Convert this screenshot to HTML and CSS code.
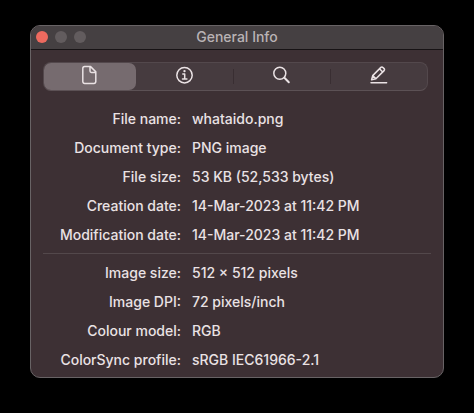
FILE: index.html
```html
<!DOCTYPE html>
<html lang="en">
<head>
  <meta charset="UTF-8">
  <meta name="viewport" content="width=device-width, initial-scale=1.0">
  <title>General Info</title>
  <link rel="stylesheet" href="styles.css">
</head>
<body>
  <main class="window">
    <header class="titlebar">
      <div class="lights">
        <button class="light close" aria-label="Close"></button>
        <button class="light" aria-label="Minimize" disabled></button>
        <button class="light" aria-label="Zoom" disabled></button>
      </div>
      <h1 class="title">General Info</h1>
    </header>

    <div class="content">
      <nav class="tabs">
        <button class="tab active" aria-label="General">
          <svg class="icon" viewBox="0 0 20 20">
            <path d="M4.6 1.6h6l5.2 5.2v9.8a1.8 1.8 0 0 1-1.8 1.8H4.6a1.8 1.8 0 0 1-1.8-1.8V3.4a1.8 1.8 0 0 1 1.8-1.8M10 1.9v4.1a1.4 1.4 0 0 0 1.4 1.4h4.1"/>
          </svg>
        </button>
        <button class="tab" aria-label="Info">
          <svg class="icon" viewBox="0 0 20 20">
            <circle cx="9.5" cy="10.2" r="7.7"/>
            <path d="M7.8 8.9h1.9v5M7.5 14h4.4"/>
            <circle class="dot" cx="9.5" cy="6.1" r="1.2"/>
          </svg>
        </button>
        <button class="tab" aria-label="Search">
          <svg class="icon" viewBox="0 0 20 20">
            <circle cx="7.8" cy="8.2" r="6"/>
            <path class="handle" d="M12.4 12.8l4.4 4.4"/>
          </svg>
        </button>
        <button class="tab" aria-label="Annotate">
          <svg class="icon" viewBox="0 0 20 20">
            <path d="M2.6 14.8l1.1-4.2 8.2-8.2a1.4 1.4 0 0 1 2 0l1.2 1.2a1.4 1.4 0 0 1 0 2l-8.2 8.2zM3.7 10.6l3.2 3.2M10.5 3.8l3.2 3.2"/>
            <path d="M2 17.8h15.6"/>
          </svg>
        </button>
      </nav>

      <dl class="info">
        <dt>File name:</dt><dd>whataido.png</dd>
        <dt>Document type:</dt><dd>PNG image</dd>
        <dt>File size:</dt><dd>53 KB (52,533 bytes)</dd>
        <dt>Creation date:</dt><dd>14-Mar-2023 at 11:42 PM</dd>
        <dt>Modification date:</dt><dd>14-Mar-2023 at 11:42 PM</dd>
      </dl>
      <hr class="divider">
      <dl class="info">
        <dt>Image size:</dt><dd>512 × 512 pixels</dd>
        <dt>Image DPI:</dt><dd>72 pixels/inch</dd>
        <dt>Colour model:</dt><dd>RGB</dd>
        <dt>ColorSync profile:</dt><dd>sRGB IEC61966-2.1</dd>
      </dl>
    </div>
  </main>
</body>
</html>
```

FILE: styles.css
```css
* {
  box-sizing: border-box;
}
body {
  margin: 0;
  padding: 25px 30px;
  background: #000;
  color: #eae2e4;
  font-family: Inter, "Liberation Sans", sans-serif;
  font-size: 14px;
}
.window {
  background: #3d3034;
  border: 1px solid #686365;
  border-radius: 10px;
  overflow: hidden;
}
.titlebar {
  display: grid;
  grid-template-columns: 1fr auto 1fr;
  align-items: center;
  height: 24px;
  padding: 0 5px 1px;
  background: #454042;
  border-bottom: 1px solid #171315;
}
.lights {
  display: flex;
  gap: 7px;
}
.light {
  width: 12px;
  height: 12px;
  padding: 0;
  border: none;
  border-radius: 50%;
  background: #625c5e;
}
.light.close {
  background: #ed6a5f;
}
.title {
  margin: 0;
  font-size: 14px;
  line-height: 16px;
  font-weight: 500;
  color: #b9b3b5;
}
.content {
  padding: 12px 12px 3px;
}
.tabs {
  display: flex;
  margin: 0 3px 13px 0;
  background: #463b3f;
  border: 1px solid #53484c;
  border-bottom-color: #5c5155;
  border-radius: 8px;
}
.tab {
  flex: 20;
  display: flex;
  align-items: center;
  justify-content: center;
  height: 27px;
  padding: 0 0 3px;
  border: none;
  background: none;
  color: #eae2e4;
}
.tab + .tab + .tab {
  background: linear-gradient(#392e32, #392e32) left center / 1px 15px no-repeat;
}
.tab.active {
  flex: 19;
  background: #766b6f;
  border-radius: 7px;
}
.icon {
  width: 20px;
  height: 20px;
  fill: none;
  stroke: currentColor;
  stroke-width: 1.5;
  stroke-linecap: round;
  stroke-linejoin: round;
}
.icon .dot {
  fill: currentColor;
  stroke: none;
}
.icon .handle {
  stroke-width: 2;
}
.info {
  display: grid;
  grid-template-columns: 138px 1fr;
  column-gap: 11px;
  margin: 0;
  line-height: 29px;
  font-weight: 500;
}
.info dt {
  text-align: right;
  white-space: nowrap;
}
.info dd {
  margin: 0;
}
.divider {
  height: 1px;
  margin: 4px 0;
  border: none;
  background: #53484b;
}
```
